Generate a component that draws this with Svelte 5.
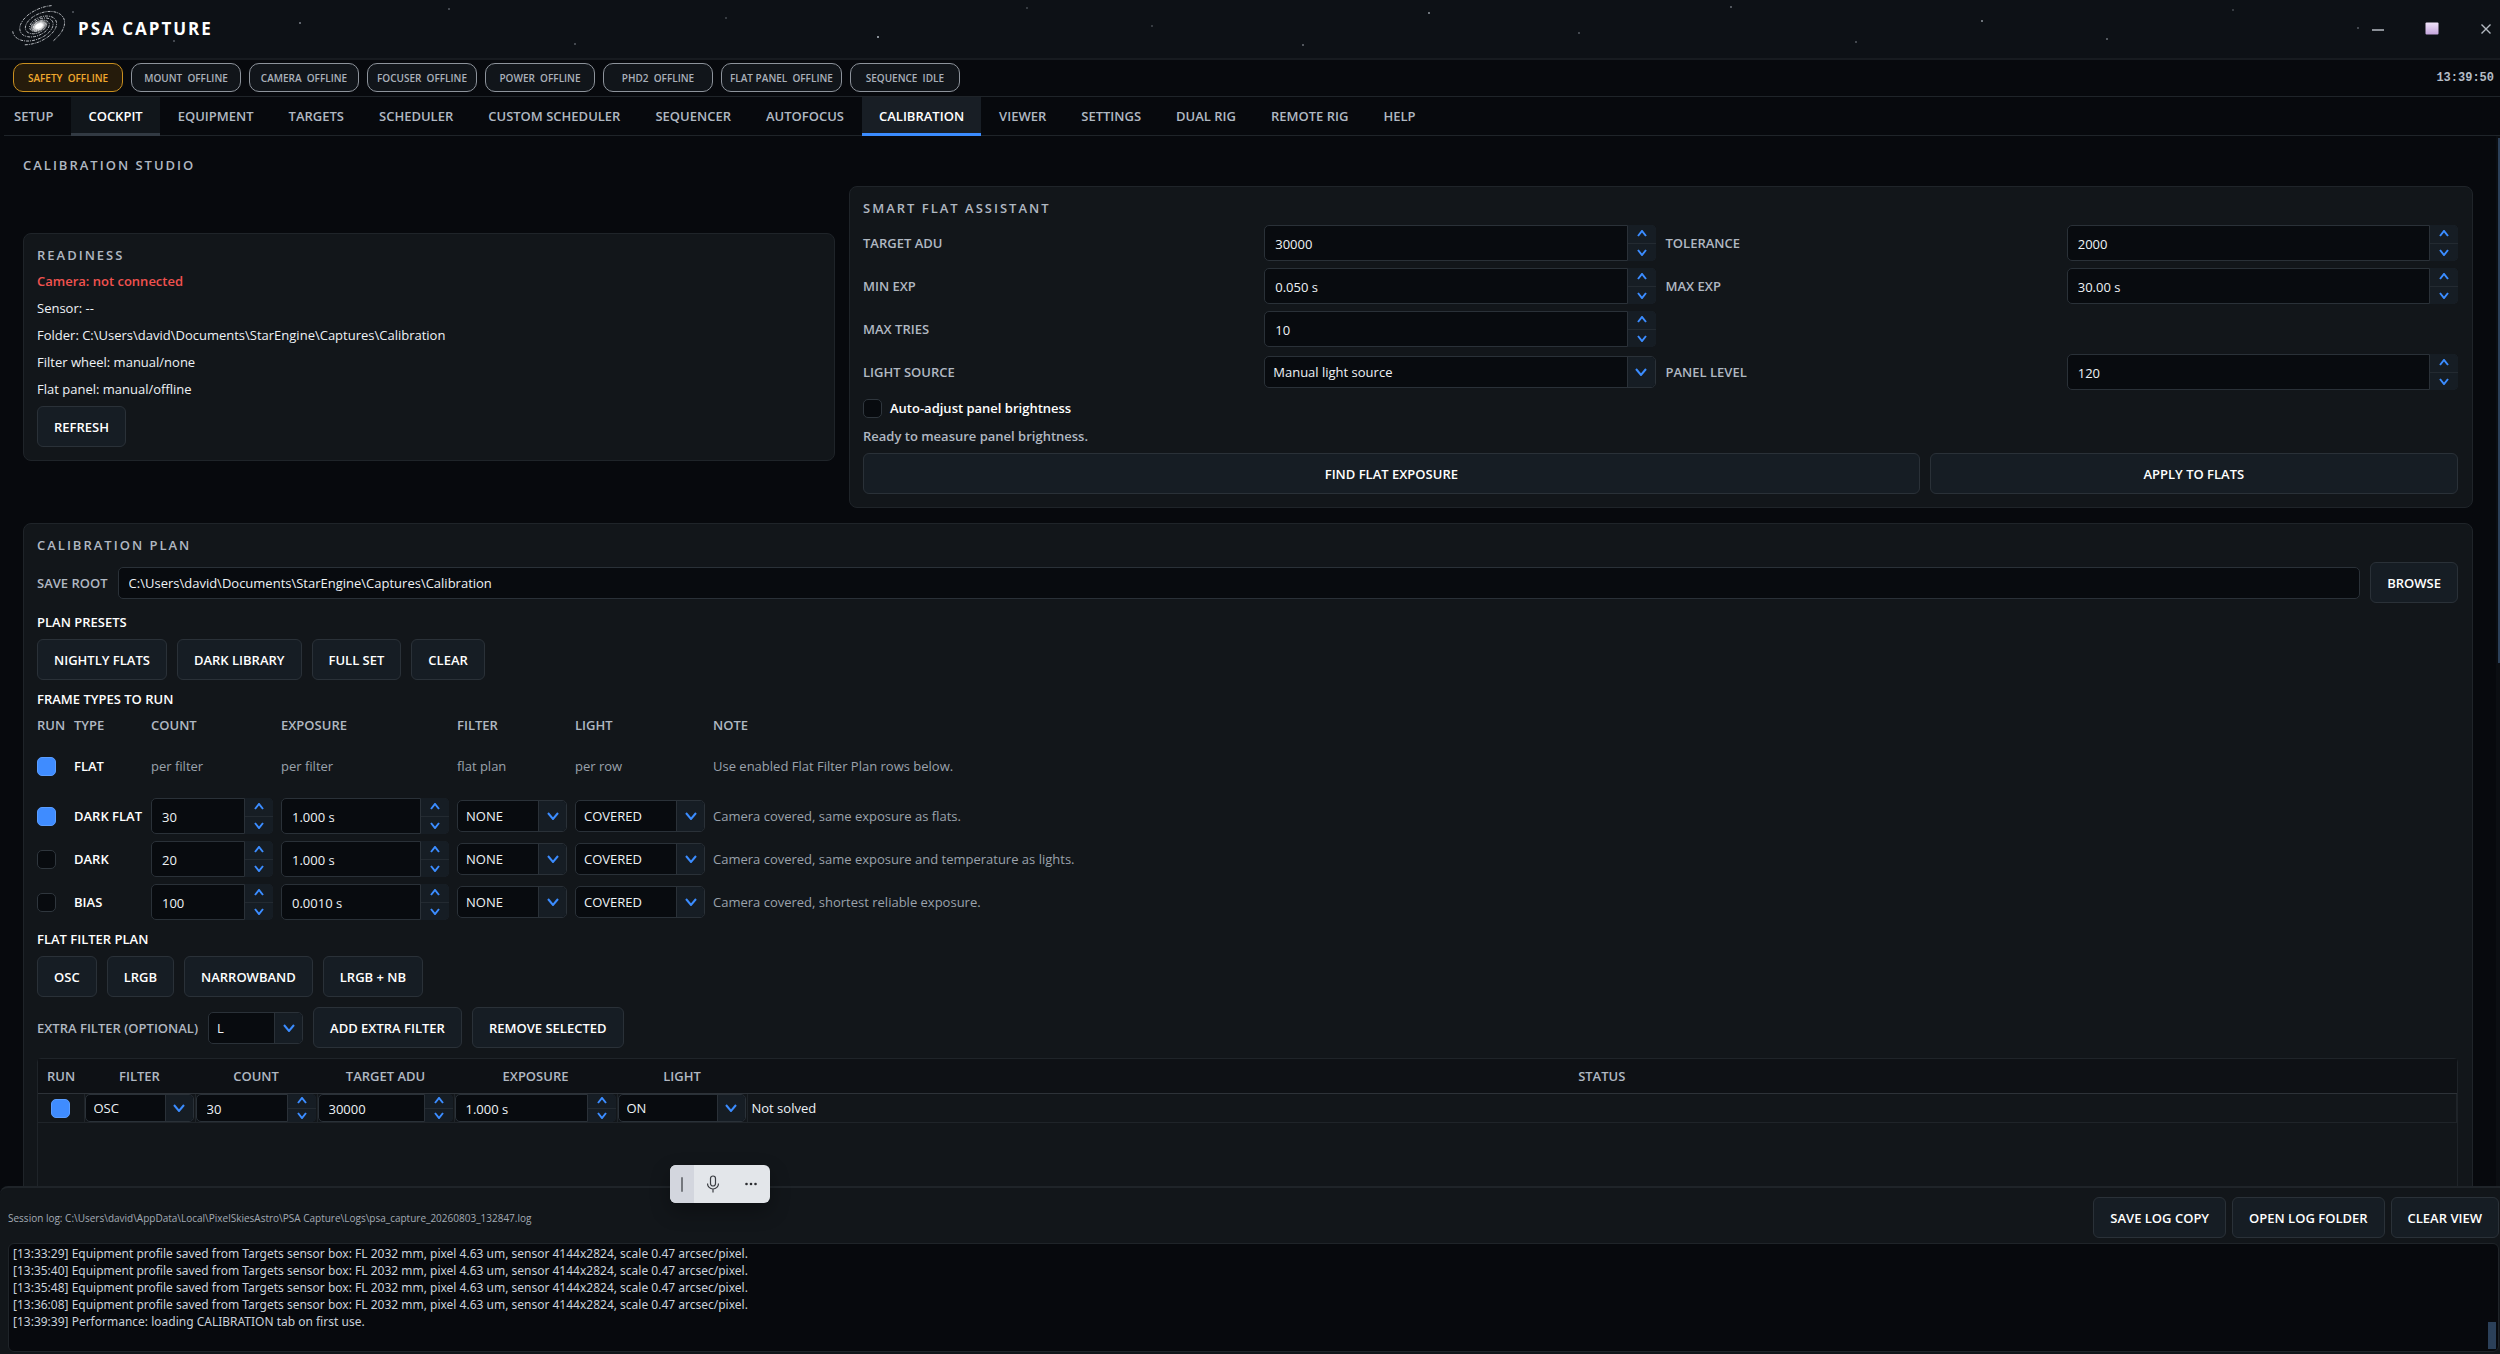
<script lang="ts">
  interface FrameType {
    id: string;
    name: string;
    run: boolean;
    count: string;
    exposure: string;
    note: string;
  }

  const stars = [
    [73, 12, 0.4], [174, 41, 0.4], [300, 23, 0.6], [449, 9, 0.4], [575, 44, 0.4], [726, 18, 0.3],
    [878, 37, 0.9], [1027, 8, 0.3], [1152, 26, 0.3], [1303, 45, 0.5], [1429, 13, 0.7], [1579, 33, 0.4],
    [1731, 7, 0.5], [1856, 42, 0.4], [1982, 21, 0.7], [2107, 39, 0.5], [2233, 10, 0.3], [2358, 28, 0.4],
  ];

  // Galaxy arms: log spirals seen at an angle, tip angle in radians and tip radius
  const arms = [
    { angle: -0.85, radius: 30, turns: 1.5 },
    { angle: 3.5, radius: 28, turns: 1.4 },
    { angle: 2.4, radius: 28, turns: 1.3 },
    { angle: 1.35, radius: 33, turns: 1.4 },
  ].map(({ angle, radius, turns }) => {
    const tilt = -0.42;
    const points: string[] = [];
    for (let i = 0; i <= 60; i++) {
      const t = (i / 60) * turns * Math.PI * 2;
      const r = radius * Math.exp(-0.2 * t);
      const x = r * Math.cos(angle - t);
      const y = r * 0.6 * Math.sin(angle - t);
      const px = 27 + x * Math.cos(tilt) - y * Math.sin(tilt);
      const py = 18 + x * Math.sin(tilt) + y * Math.cos(tilt);
      points.push(`${px.toFixed(1)} ${py.toFixed(1)}`);
    }
    return 'M' + points.join('L');
  });

  const statuses = [
    'SAFETY  OFFLINE',
    'MOUNT  OFFLINE',
    'CAMERA  OFFLINE',
    'FOCUSER  OFFLINE',
    'POWER  OFFLINE',
    'PHD2  OFFLINE',
    'FLAT PANEL  OFFLINE',
    'SEQUENCE  IDLE',
  ];

  const tabs = [
    'SETUP', 'COCKPIT', 'EQUIPMENT', 'TARGETS', 'SCHEDULER', 'CUSTOM SCHEDULER', 'SEQUENCER',
    'AUTOFOCUS', 'CALIBRATION', 'VIEWER', 'SETTINGS', 'DUAL RIG', 'REMOTE RIG', 'HELP',
  ];
  let activeTab = $state('CALIBRATION');

  const readiness = [
    'Sensor: --',
    'Folder: C:\\Users\\david\\Documents\\StarEngine\\Captures\\Calibration',
    'Filter wheel: manual/none',
    'Flat panel: manual/offline',
  ];

  const frameTypes: FrameType[] = [
    { id: 'dark-flat', name: 'DARK FLAT', run: true, count: '30', exposure: '1.000 s', note: 'Camera covered, same exposure as flats.' },
    { id: 'dark', name: 'DARK', run: false, count: '20', exposure: '1.000 s', note: 'Camera covered, same exposure and temperature as lights.' },
    { id: 'bias', name: 'BIAS', run: false, count: '100', exposure: '0.0010 s', note: 'Camera covered, shortest reliable exposure.' },
  ];

  let saveRoot = $state('C:\\Users\\david\\Documents\\StarEngine\\Captures\\Calibration');

  const profileSaved = 'Equipment profile saved from Targets sensor box: FL 2032 mm, pixel 4.63 um, sensor 4144x2824, scale 0.47 arcsec/pixel.';
  const log = [
    `[13:33:29] ${profileSaved}`,
    `[13:35:40] ${profileSaved}`,
    `[13:35:48] ${profileSaved}`,
    `[13:36:08] ${profileSaved}`,
    '[13:39:39] Performance: loading CALIBRATION tab on first use.',
  ].join('\n');
</script>

{#snippet spin(id: string, value: string, label?: string)}
  <div class="spin">
    <input {id} type="text" {value} aria-label={label} />
    <div class="spin-buttons">
      <button type="button" aria-label="Increase">
        <svg width="10" height="7" viewBox="0 0 10 7"><path d="M1 6l4-5 4 5" /></svg>
      </button>
      <button type="button" aria-label="Decrease">
        <svg width="10" height="7" viewBox="0 0 10 7"><path d="M1 1l4 5 4-5" /></svg>
      </button>
    </div>
  </div>
{/snippet}

{#snippet combo(id: string, options: string[], label?: string)}
  <div class="combo">
    <select {id} aria-label={label}>
      {#each options as option}
        <option>{option}</option>
      {/each}
    </select>
    <span class="combo-arrow">
      <svg width="12" height="8" viewBox="0 0 12 8"><path d="M1 1l5 6 5-6" /></svg>
    </span>
  </div>
{/snippet}

<div class="app">
  <header class="titlebar">
    <svg class="stars" aria-hidden="true">
      {#each stars as [x, y, opacity]}
        <circle cx="{x / 25}%" cy={y} r="1" fill="#c4ccd6" fill-opacity={opacity} />
      {/each}
    </svg>
    <svg class="logo" width="56" height="38" viewBox="0 0 56 38" aria-hidden="true">
      <defs>
        <radialGradient id="core">
          <stop offset="0" stop-color="#fff" />
          <stop offset="0.35" stop-color="#fff" />
          <stop offset="1" stop-color="#fff" stop-opacity="0" />
        </radialGradient>
      </defs>
      {#each arms as d}
        <path {d} fill="none" stroke="#b9bdc2" stroke-width="1" stroke-dasharray="3 1 1 1" />
      {/each}
      <ellipse cx="27" cy="18" rx="10" ry="6" fill="url(#core)" transform="rotate(-24 27 18)" />
    </svg>
    <h1>PSA CAPTURE</h1>
    <div class="window-controls">
      <button type="button" aria-label="Minimize">
        <svg width="14" height="14" viewBox="0 0 14 14"><path d="M1 8h12" stroke="#b4bac2" stroke-width="1.5" /></svg>
      </button>
      <button type="button" aria-label="Maximize">
        <svg width="14" height="14" viewBox="0 0 14 14">
          <defs>
            <linearGradient id="tile" x2="0" y2="1">
              <stop offset="0" stop-color="#f1e4fa" />
              <stop offset="1" stop-color="#c3a5dc" />
            </linearGradient>
          </defs>
          <rect x="0.5" y="0.5" width="13" height="12" rx="1" fill="url(#tile)" />
        </svg>
      </button>
      <button type="button" aria-label="Close">
        <svg width="14" height="14" viewBox="0 0 14 14"><path d="M2.500 2.500l9 9m0-9l-9 9" stroke="#b4bac2" stroke-width="1.400" /></svg>
      </button>
    </div>
  </header>

  <div class="statusbar">
    {#each statuses as status, i}
      <span class="pill" class:warn={i === 0}>{status}</span>
    {/each}
    <time>13:39:50</time>
  </div>

  <nav class="tabs">
    {#each tabs as tab}
      <button
        type="button"
        class:hovered={tab === 'COCKPIT'}
        class:active={tab === activeTab}
        onclick={() => (activeTab = tab)}>{tab}</button>
    {/each}
  </nav>

  <main>
    <h2 class="title">CALIBRATION STUDIO</h2>

    <div class="top-grid">
      <section class="card">
        <h3 class="title">READINESS</h3>
        <div class="readiness">
          <p class="error">Camera: not connected</p>
          {#each readiness as line}
            <p>{line}</p>
          {/each}
        </div>
        <button class="btn" type="button">REFRESH</button>
      </section>

      <section class="card">
        <h3 class="title">SMART FLAT ASSISTANT</h3>
        <div class="flat-form">
          <label for="target-adu">TARGET ADU</label>
          {@render spin('target-adu', '30000')}
          <label for="tolerance">TOLERANCE</label>
          {@render spin('tolerance', '2000')}

          <label for="min-exp">MIN EXP</label>
          {@render spin('min-exp', '0.050 s')}
          <label for="max-exp">MAX EXP</label>
          {@render spin('max-exp', '30.00 s')}

          <label for="max-tries">MAX TRIES</label>
          {@render spin('max-tries', '10')}
          <span></span>
          <span></span>

          <label for="light-source">LIGHT SOURCE</label>
          {@render combo('light-source', ['Manual light source', 'Flat panel'])}
          <label for="panel-level">PANEL LEVEL</label>
          {@render spin('panel-level', '120')}
        </div>
        <label class="check-row">
          <input type="checkbox" />
          Auto-adjust panel brightness
        </label>
        <p class="hint">Ready to measure panel brightness.</p>
        <div class="flat-actions">
          <button class="btn" type="button">FIND FLAT EXPOSURE</button>
          <button class="btn" type="button">APPLY TO FLATS</button>
        </div>
      </section>
    </div>

    <section class="card">
      <h3 class="title">CALIBRATION PLAN</h3>
      <div class="row">
        <label for="save-root">SAVE ROOT</label>
        <input id="save-root" class="text-input" type="text" bind:value={saveRoot} />
        <button class="btn" type="button">BROWSE</button>
      </div>

      <h4>PLAN PRESETS</h4>
      <div class="row">
        {#each ['NIGHTLY FLATS', 'DARK LIBRARY', 'FULL SET', 'CLEAR'] as preset}
          <button class="btn" type="button">{preset}</button>
        {/each}
      </div>

      <h4>FRAME TYPES TO RUN</h4>
      <div class="frame-grid">
        {#each ['RUN', 'TYPE', 'COUNT', 'EXPOSURE', 'FILTER', 'LIGHT', 'NOTE'] as heading}
          <span class="heading">{heading}</span>
        {/each}

        <input id="run-flat" type="checkbox" checked />
        <label class="type flat" for="run-flat">FLAT</label>
        <span class="note">per filter</span>
        <span class="note">per filter</span>
        <span class="note">flat plan</span>
        <span class="note">per row</span>
        <span class="note">Use enabled Flat Filter Plan rows below.</span>

        {#each frameTypes as frame (frame.id)}
          <input id="run-{frame.id}" type="checkbox" checked={frame.run} />
          <label class="type" for="run-{frame.id}">{frame.name}</label>
          {@render spin(`count-${frame.id}`, frame.count, `${frame.name} count`)}
          {@render spin(`exposure-${frame.id}`, frame.exposure, `${frame.name} exposure`)}
          {@render combo(`filter-${frame.id}`, ['NONE', 'L', 'R', 'G', 'B'], `${frame.name} filter`)}
          {@render combo(`light-${frame.id}`, ['COVERED', 'ON', 'OFF'], `${frame.name} light`)}
          <span class="note">{frame.note}</span>
        {/each}
      </div>

      <h4>FLAT FILTER PLAN</h4>
      <div class="row">
        {#each ['OSC', 'LRGB', 'NARROWBAND', 'LRGB + NB'] as set}
          <button class="btn" type="button">{set}</button>
        {/each}
      </div>
      <div class="row">
        <label for="extra-filter">EXTRA FILTER (OPTIONAL)</label>
        <div class="extra-combo">{@render combo('extra-filter', ['L', 'R', 'G', 'B'])}</div>
        <button class="btn" type="button">ADD EXTRA FILTER</button>
        <button class="btn" type="button">REMOVE SELECTED</button>
      </div>

      <div class="table-box">
        <table>
          <colgroup>
            <col class="c-run" />
            <col class="c-filter" />
            <col class="c-count" />
            <col class="c-target" />
            <col class="c-exposure" />
            <col class="c-light" />
            <col />
          </colgroup>
          <thead>
            <tr>
              {#each ['RUN', 'FILTER', 'COUNT', 'TARGET ADU', 'EXPOSURE', 'LIGHT', 'STATUS'] as column}
                <th>{column}</th>
              {/each}
            </tr>
          </thead>
          <tbody>
            <tr>
              <td><input type="checkbox" checked aria-label="Run OSC" /></td>
              <td>{@render combo('row-filter', ['OSC', 'L', 'R', 'G', 'B'], 'Filter')}</td>
              <td>{@render spin('row-count', '30', 'Count')}</td>
              <td>{@render spin('row-target', '30000', 'Target ADU')}</td>
              <td>{@render spin('row-exposure', '1.000 s', 'Exposure')}</td>
              <td>{@render combo('row-light', ['ON', 'OFF', 'COVERED'], 'Light')}</td>
              <td class="status">Not solved</td>
            </tr>
          </tbody>
        </table>
      </div>
    </section>

    <div class="page-scroll"><div class="thumb"></div></div>
  </main>

  <footer>
    <div class="log-bar">
      <span>Session log: C:\Users\david\AppData\Local\PixelSkiesAstro\PSA Capture\Logs\psa_capture_20260803_132847.log</span>
      <button class="btn" type="button">SAVE LOG COPY</button>
      <button class="btn" type="button">OPEN LOG FOLDER</button>
      <button class="btn" type="button">CLEAR VIEW</button>
    </div>
    <div class="log-box">
      <textarea readonly aria-label="Session log" rows="6" value={log}></textarea>
      <div class="log-thumb"></div>
    </div>
  </footer>

  <!-- Voice typing bar -->
  <div class="voice-bar">
    <span class="grip"></span>
    <button type="button" aria-label="Microphone">
      <svg width="14" height="18" viewBox="0 0 14 18" fill="none" stroke="#3a3d42" stroke-width="1.200">
        <rect x="4.500" y="1" width="5" height="10" rx="2.500" />
        <path d="M1.500 8.500a5.500 5.500 0 0 0 11 0M7 14v3.500" />
      </svg>
    </button>
    <button type="button" aria-label="More">
      <svg width="14" height="4" viewBox="0 0 14 4" fill="#2b2d31">
        <circle cx="2.500" cy="2" r="1.300" /><circle cx="7" cy="2" r="1.300" /><circle cx="11.500" cy="2" r="1.300" />
      </svg>
    </button>
  </div>
</div>

<style>
  :global(body) {
    background: #07090d;
  }

  .app {
    --card: #12161a;
    --line: #1f2429;
    --edge: #2a3138;
    --raised: #161d24;
    --field: #080b0f;
    --blue: #3b8cff;
    --muted: #b0b8c2;
    position: relative;
    display: flex;
    flex-direction: column;
    height: 100vh;
    overflow: hidden;
    color: #eef2f6;
    font-family: 'Open Sans', 'Noto Sans', sans-serif;
    font-size: 13px;
    line-height: 18px;
  }

  h1, h2, h3, h4, p {
    margin: 0;
  }

  button, input, select, textarea {
    box-sizing: border-box;
    margin: 0;
    font: inherit;
    color: inherit;
  }

  button {
    padding: 0;
    border: none;
    background: none;
    cursor: pointer;
  }

  /* ── Title bar ── */
  .titlebar {
    position: relative;
    display: flex;
    align-items: center;
    flex: none;
    height: 58px;
    padding: 0 7px 0 12px;
    background: #0d1116;
    border-bottom: 2px solid #171b20;
  }

  .stars {
    position: absolute;
    inset: 0;
    width: 100%;
    height: 100%;
  }

  .logo {
    position: relative;
    overflow: visible;
    margin-bottom: 4px;
  }

  h1 {
    margin-left: 10px;
    font-size: 17px;
    line-height: 24px;
    font-weight: 700;
    letter-spacing: 2px;
    color: #fff;
  }

  .window-controls {
    position: relative;
    display: flex;
    gap: 40px;
    margin-left: auto;
  }

  .window-controls svg {
    display: block;
  }

  /* ── Status bar ── */
  .statusbar {
    display: flex;
    align-items: center;
    gap: 8px;
    flex: none;
    height: 35px;
    padding: 0 6px 1px 13px;
    border-bottom: 1px solid var(--line);
  }

  .pill {
    box-sizing: border-box;
    min-width: 110px;
    height: 29px;
    padding: 1px 8px 0;
    border: 1px solid #8d939b;
    border-radius: 10px;
    background: #11151a;
    color: #aab1ba;
    font-size: 10px;
    line-height: 27px;
    font-weight: 600;
    text-align: center;
    white-space: pre;
  }

  .pill.warn {
    border-color: #c98f1f;
    background: #251b0b;
    color: #f0a92e;
  }

  time {
    margin-left: auto;
    color: #b4bcc6;
    font-family: 'Liberation Mono', monospace;
    font-size: 12px;
    font-weight: 700;
  }

  /* ── Tabs ── */
  .tabs {
    display: flex;
    gap: 1px;
    flex: none;
    margin-left: 4px;
    border-bottom: 1px solid var(--line);
  }

  .tabs button {
    height: 39px;
    margin-bottom: -1px;
    padding: 2px 17px 0;
    border-bottom: 3px solid transparent;
    color: var(--muted);
    font-weight: 600;
  }

  .tabs button:first-child {
    padding-left: 10px;
  }

  .tabs .hovered {
    background: #11161b;
    border-bottom-color: #323a43;
    color: #fff;
  }

  .tabs .active {
    background: #181e25;
    border-bottom-color: var(--blue);
    color: #fff;
  }

  /* ── Cards ── */
  main {
    position: relative;
    flex: 1;
    min-height: 0;
    overflow: hidden;
    padding: 20px 27px 0 23px;
  }

  .title {
    color: var(--muted);
    font-size: 13px;
    line-height: 18px;
    font-weight: 600;
    letter-spacing: 2px;
  }

  .top-grid {
    display: grid;
    grid-template-columns: 1fr 2fr;
    align-items: center;
    gap: 14px;
    margin: 12px 0 15px;
  }

  .card {
    padding: 12px 14px 13px 13px;
    border: 1px solid var(--line);
    border-radius: 8px;
    background: var(--card);
  }

  .card .title {
    margin-bottom: 8px;
  }

  .readiness {
    display: flex;
    flex-direction: column;
    gap: 9px;
    margin: 8px 0;
  }

  .error {
    color: #f0524f;
    font-weight: 600;
  }

  .btn {
    height: 41px;
    padding: 0 16px;
    border: 1px solid var(--edge);
    border-radius: 6px;
    background: var(--raised);
    color: #fff;
    font-weight: 600;
    white-space: nowrap;
  }

  label, .heading {
    color: var(--muted);
    font-weight: 600;
  }

  /* ── Fields ── */
  .spin {
    display: flex;
    height: 36px;
  }

  .spin input {
    flex: 1;
    min-width: 0;
    padding: 2px 10px 0;
    border: 1px solid var(--edge);
    border-radius: 5px 0 0 5px;
    background: var(--field);
  }

  .spin-buttons {
    display: flex;
    flex-direction: column;
    gap: 1px;
    width: 28px;
    border-radius: 0 5px 5px 0;
    overflow: hidden;
    background: #232a31;
  }

  .spin-buttons button {
    display: flex;
    flex: 1;
    align-items: center;
    justify-content: center;
    background: var(--raised);
  }

  .spin svg, .combo svg {
    fill: none;
    stroke: var(--blue);
    stroke-width: 2;
  }

  .combo {
    position: relative;
    height: 32px;
  }

  .combo select {
    width: 100%;
    height: 100%;
    padding: 0 32px 0 8px;
    border: 1px solid var(--edge);
    border-radius: 5px;
    background: var(--field);
    appearance: none;
  }

  .combo-arrow {
    position: absolute;
    top: 1px;
    right: 1px;
    bottom: 1px;
    display: flex;
    align-items: center;
    justify-content: center;
    width: 27px;
    border-left: 1px solid var(--edge);
    border-radius: 0 4px 4px 0;
    background: var(--raised);
    pointer-events: none;
  }

  .text-input {
    flex: 1;
    height: 32px;
    padding: 0 10px;
    border: 1px solid var(--edge);
    border-radius: 5px;
    background: var(--field);
  }

  input[type='checkbox'] {
    flex: none;
    width: 19px;
    height: 19px;
    border: 1px solid #2f363d;
    border-radius: 5px;
    background: var(--field);
    appearance: none;
  }

  input[type='checkbox']:checked {
    border-color: #5a9dff;
    background: #3f8cff;
  }

  .flat-form {
    display: grid;
    grid-template-columns: repeat(4, 1fr);
    align-items: center;
    gap: 7px 10px;
    grid-auto-rows: 36px;
  }

  .check-row {
    display: flex;
    align-items: center;
    gap: 8px;
    height: 22px;
    margin-top: 7px;
    color: #fff;
  }

  .hint {
    margin: 7px 0;
    color: var(--muted);
    line-height: 20px;
    font-weight: 600;
  }

  .flat-actions {
    display: grid;
    grid-template-columns: 2fr 1fr;
    gap: 10px;
  }

  /* ── Calibration plan ── */
  .row {
    display: flex;
    align-items: center;
    gap: 10px;
    margin-bottom: 10px;
  }

  h4 {
    margin-bottom: 8px;
    color: #fff;
    font-size: 13px;
    line-height: 18px;
    font-weight: 600;
  }

  .frame-grid {
    display: grid;
    grid-template-columns: 29px 69px 122px 168px 110px 130px 1fr;
    align-items: center;
    gap: 7px 8px;
    margin-bottom: 10px;
  }

  .frame-grid .type {
    color: #fff;
    font-weight: 600;
    white-space: nowrap;
  }

  .frame-grid .flat {
    line-height: 50px;
  }

  .note {
    color: #9aa2ac;
  }

  .extra-combo {
    width: 95px;
  }

  .table-box {
    min-height: 240px;
    border: 1px solid var(--line);
    border-radius: 4px 4px 0 0;
  }

  table {
    width: 100%;
    table-layout: fixed;
    border-collapse: collapse;
  }

  .c-run { width: 46px; }
  .c-filter { width: 111px; }
  .c-count { width: 122px; }
  .c-target { width: 137px; }
  .c-exposure { width: 163px; }
  .c-light { width: 130px; }

  th {
    height: 34px;
    padding: 0;
    border-bottom: 1px solid #2d3238;
    background: #0e1115;
    color: var(--muted);
    font-weight: 600;
  }

  td {
    height: 28px;
    padding: 0 1px 0 0;
    border: 1px solid var(--line);
    border-left: none;
  }

  td .spin, td .combo {
    height: 28px;
  }

  td input[type='checkbox'] {
    display: block;
    margin: 0 auto;
  }

  .status {
    padding-left: 4px;
  }

  .page-scroll {
    position: absolute;
    top: 0;
    right: 0;
    bottom: 0;
    width: 4px;
    background: #0b0e12;
  }

  .thumb {
    height: 50%;
    margin: 2px 0 0 2px;
    background: #2b4059;
  }

  /* ── Session log ── */
  footer {
    flex: none;
    padding: 9px 1px 2px 8px;
    border-top: 2px solid var(--line);
    border-radius: 8px 0 0 0;
    background: var(--card);
  }

  .log-bar {
    display: flex;
    align-items: center;
    gap: 6px;
    margin-bottom: 5px;
  }

  .log-bar span {
    flex: 1;
    color: #a3abb5;
    font-size: 10px;
  }

  .log-box {
    position: relative;
  }

  textarea {
    display: block;
    width: 100%;
    height: 109px;
    padding: 1px 4px;
    border: 1px solid var(--line);
    border-radius: 6px;
    outline: none;
    background: #07090d;
    color: #c9d1db;
    font-family: 'Noto Sans', sans-serif;
    font-size: 12px;
    line-height: 17px;
    resize: none;
    overflow: hidden;
  }

  .log-thumb {
    position: absolute;
    right: 3px;
    bottom: 3px;
    width: 8px;
    height: 27px;
    background: #2b4059;
  }

  /* ── Voice bar ── */
  .voice-bar {
    position: absolute;
    left: 670px;
    bottom: 151px;
    display: grid;
    grid-template-columns: 24px 38px 38px;
    align-items: stretch;
    height: 38px;
    border-radius: 6px;
    overflow: hidden;
    background: #e3e6ea;
    box-shadow: 0 8px 20px rgba(0, 0, 0, 0.3);
  }

  .grip {
    display: flex;
    align-items: center;
    justify-content: center;
    background: #d3d6de;
  }

  .grip::before {
    content: '';
    width: 2px;
    height: 15px;
    border-radius: 1px;
    background: #74777d;
  }

  .voice-bar button {
    display: flex;
    align-items: center;
    justify-content: center;
  }
</style>
